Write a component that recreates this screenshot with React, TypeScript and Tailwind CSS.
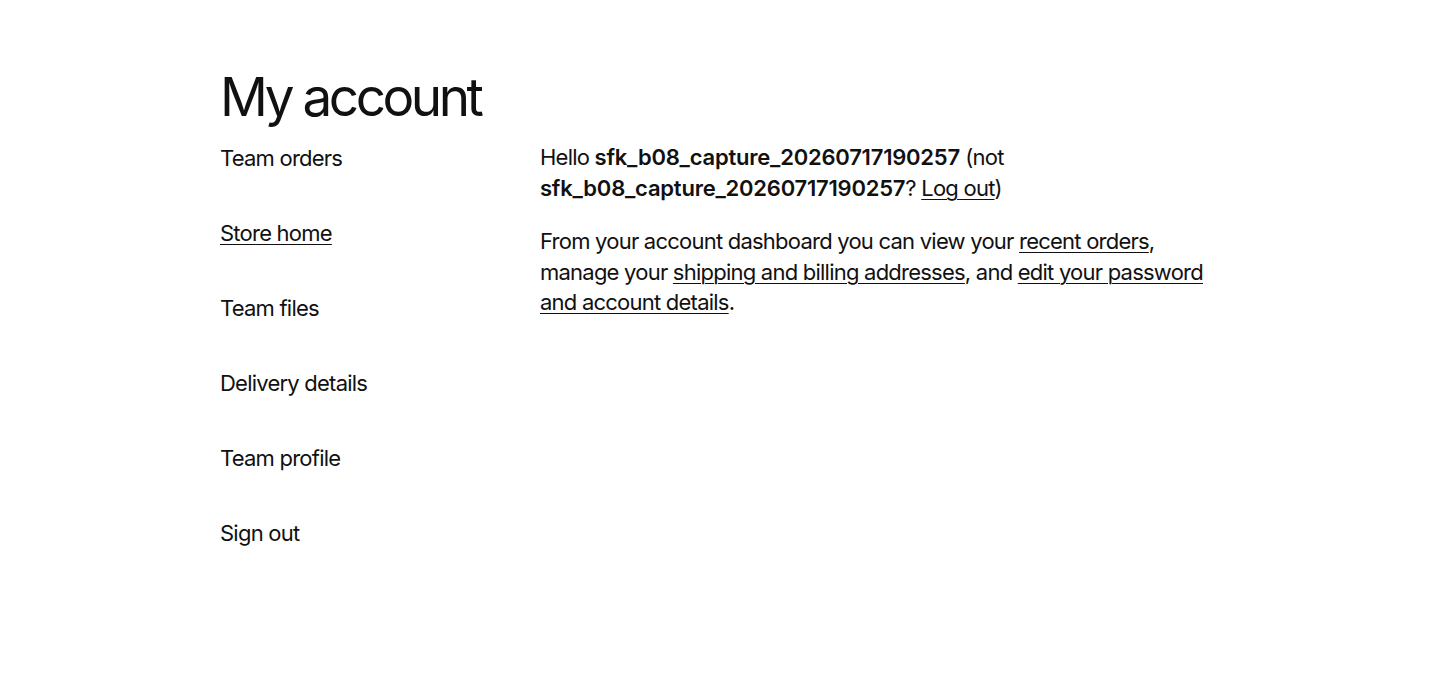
export default function App() {
  const nav = [
    { label: "Team orders", link: false },
    { label: "Store home", link: true },
    { label: "Team files", link: false },
    { label: "Delivery details", link: false },
    { label: "Team profile", link: false },
    { label: "Sign out", link: false },
  ];
  const linkCls = "underline underline-offset-[3px] decoration-1";
  return (
    <div
      className="min-h-[684px] bg-white text-[#111111]"
      style={{ fontFamily: "Inter, 'Noto Sans', sans-serif" }}
    >
      <div className="mx-auto w-[1000px] pt-[62px]">
        <h1 className="text-[53px] leading-[70px] font-normal tracking-[-0.065em] mb-[8px]">My account</h1>
        <div className="flex text-[22px] tracking-[-0.035em]">
          <nav className="w-[320px] shrink-0 flex flex-col">
            {nav.map((n) => (
              <a
                key={n.label}
                href="#"
                className={`block h-[75px] leading-[36px] ${n.link ? linkCls : ""}`}
              >
                {n.label}
              </a>
            ))}
          </nav>
          <div className="flex-1">
            <p className="leading-[31px] pt-[2px]">
              Hello <strong className="font-semibold tracking-[-0.01em]">sfk_b08_capture_20260717190257</strong> (not{" "}
              <strong className="font-semibold tracking-[-0.01em]">sfk_b08_capture_20260717190257</strong>?{" "}
              <a href="#" className={linkCls}>Log out</a>)
            </p>
            <p className="leading-[30.5px] mt-[22px]">
              From your account dashboard you can view your{" "}
              <a href="#" className={linkCls}>recent orders</a>, manage your{" "}
              <a href="#" className={linkCls}>shipping and billing addresses</a>, and{" "}
              <a href="#" className={linkCls}>edit your password and account details</a>.
            </p>
          </div>
        </div>
      </div>
    </div>
  );
}
